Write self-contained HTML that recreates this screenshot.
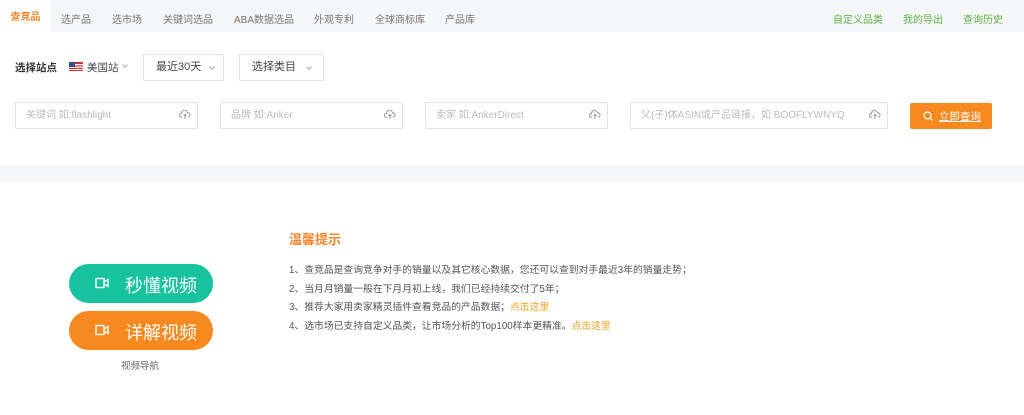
<!DOCTYPE html>
<html><head><meta charset="utf-8"><style>
*{margin:0;padding:0;box-sizing:border-box}
body{width:1024px;height:415px;background:#fff;font-family:"Liberation Sans","Noto Sans CJK SC",sans-serif;position:relative;overflow:hidden;color:#333}
.a{position:absolute;white-space:nowrap}
.nav{position:absolute;left:0;top:0;width:1024px;height:32px;background:#f5f6f8}
.nav span{position:absolute;top:11px;font-size:10px;color:#777}
.nav .on{left:0;top:0;width:51px;height:32px;background:#fff;color:#f0862a;line-height:36px;text-align:center;font-weight:bold}
.nav .r{color:#5fb345}
.box{position:absolute;border:1px solid #e2e2e2;border-radius:2px;background:#fff}
.ph{position:absolute;top:6px;font-size:10px;color:#bbb;line-height:14px}
.cl{position:absolute;right:6px;top:6px;width:12px;height:12px}
.dd{font-size:11px;color:#444;top:5px;position:absolute;line-height:15px}
.chev{position:absolute;top:10px;width:4px;height:4px;border-right:1px solid #aaa;border-bottom:1px solid #aaa;transform:rotate(45deg)}
.btn{position:absolute;left:69px;width:144px;height:39px;border-radius:20px;color:#fff;font-size:18px}
.btn span{position:absolute;left:56px;top:8px}
.btn svg{position:absolute;left:26px;top:13px}
.tip{font-size:9.8px;color:#555;left:289px}
.lk{color:#f0a020}
</style></head><body>
<div class="nav">
<span class="on">查竞品</span>
<span style="left:61px">选产品</span>
<span style="left:112px">选市场</span>
<span style="left:163px">关键词选品</span>
<span style="left:234px">ABA数据选品</span>
<span style="left:314px">外观专利</span>
<span style="left:375px">全球商标库</span>
<span style="left:445px">产品库</span>
<span class="r" style="left:833px">自定义品类</span>
<span class="r" style="left:903px">我的导出</span>
<span class="r" style="left:963px">查询历史</span>
</div>
<div class="a" style="left:15px;top:60px;font-size:10.5px;font-weight:bold;color:#333">选择站点</div>
<svg class="a" style="left:69px;top:62px" width="14" height="9"><rect width="14" height="9" fill="#c33"/><rect y="2" width="14" height="1.3" fill="#fff"/><rect y="4.5" width="14" height="1.3" fill="#fff"/><rect y="7" width="14" height="1" fill="#fff"/><rect width="6" height="5" fill="#3c4a8f"/></svg>
<div class="a" style="left:87px;top:60px;font-size:10.5px;color:#444">美国站</div>
<div class="chev" style="left:123px;top:63px;position:absolute"></div>
<div class="box" style="left:143px;top:54px;width:81px;height:27px"><span class="dd" style="left:12px">最近30天</span><div class="chev" style="left:66px"></div></div>
<div class="box" style="left:239px;top:54px;width:85px;height:27px"><span class="dd" style="left:12px">选择类目</span><div class="chev" style="left:67px"></div></div>

<div class="box" style="left:15px;top:102px;width:183px;height:27px"><span class="ph" style="left:10px">关键词 如:flashlight</span><svg class="cl" viewBox="0 0 12 12"><path d="M3 8.5H2.5a2 2 0 0 1 0-4 3 3 0 0 1 6-0.5 2 2 0 0 1 1 4H9M6 10V5.5M4.5 7L6 5.5 7.5 7" fill="none" stroke="#999" stroke-width="1"/></svg></div>
<div class="box" style="left:220px;top:102px;width:183px;height:27px"><span class="ph" style="left:10px">品牌 如:Anker</span><svg class="cl" viewBox="0 0 12 12"><path d="M3 8.5H2.5a2 2 0 0 1 0-4 3 3 0 0 1 6-0.5 2 2 0 0 1 1 4H9M6 10V5.5M4.5 7L6 5.5 7.5 7" fill="none" stroke="#999" stroke-width="1"/></svg></div>
<div class="box" style="left:425px;top:102px;width:183px;height:27px"><span class="ph" style="left:10px">卖家 如:AnkerDirect</span><svg class="cl" viewBox="0 0 12 12"><path d="M3 8.5H2.5a2 2 0 0 1 0-4 3 3 0 0 1 6-0.5 2 2 0 0 1 1 4H9M6 10V5.5M4.5 7L6 5.5 7.5 7" fill="none" stroke="#999" stroke-width="1"/></svg></div>
<div class="box" style="left:630px;top:102px;width:258px;height:27px"><span class="ph" style="left:10px">父(子)体ASIN或产品链接，如 BOOFLYWNYQ</span><svg class="cl" viewBox="0 0 12 12"><path d="M3 8.5H2.5a2 2 0 0 1 0-4 3 3 0 0 1 6-0.5 2 2 0 0 1 1 4H9M6 10V5.5M4.5 7L6 5.5 7.5 7" fill="none" stroke="#999" stroke-width="1"/></svg></div>
<div class="a" style="left:910px;top:103px;width:82px;height:26px;background:#f7891f;border-radius:2px;color:#fff;font-size:10.5px">
<svg style="position:absolute;left:13px;top:8px" width="10" height="10"><circle cx="4.5" cy="4.5" r="3.5" fill="none" stroke="#fff" stroke-width="1.2"/><path d="M7 7l2.5 2.5" stroke="#fff" stroke-width="1.2"/></svg>
<span style="position:absolute;left:29px;top:6px;text-decoration:underline">立即查询</span></div>

<div class="a" style="left:0;top:165px;width:1024px;height:17px;background:#f5f6f8"></div>

<div class="btn" style="top:264px;background:#17c29f"><svg width="14" height="12" viewBox="0 0 14 12"><rect x="1" y="1.5" width="8" height="9" fill="none" stroke="#fff" stroke-width="1.4"/><path d="M9 5l4-2.5v7L9 7" fill="none" stroke="#fff" stroke-width="1.4"/></svg><span>秒懂视频</span></div>
<div class="btn" style="top:311px;background:#f7891f"><svg width="14" height="12" viewBox="0 0 14 12"><rect x="1" y="1.5" width="8" height="9" fill="none" stroke="#fff" stroke-width="1.4"/><path d="M9 5l4-2.5v7L9 7" fill="none" stroke="#fff" stroke-width="1.4"/></svg><span>详解视频</span></div>
<div class="a" style="left:121px;top:358px;font-size:9.5px;color:#666">视频导航</div>

<div class="a" style="left:289px;top:229px;font-size:13px;font-weight:bold;color:#f0862a">温馨提示</div>
<div class="a tip" style="top:262px">1、查竞品是查询竞争对手的销量以及其它核心数据，您还可以查到对手最近3年的销量走势；</div>
<div class="a tip" style="top:281px">2、当月月销量一般在下月月初上线，我们已经持续交付了5年；</div>
<div class="a tip" style="top:299px">3、推荐大家用卖家精灵插件查看竞品的产品数据；<span class="lk">点击这里</span></div>
<div class="a tip" style="top:318px">4、选市场已支持自定义品类，让市场分析的Top100样本更精准。<span class="lk">点击这里</span></div>
</body></html>
